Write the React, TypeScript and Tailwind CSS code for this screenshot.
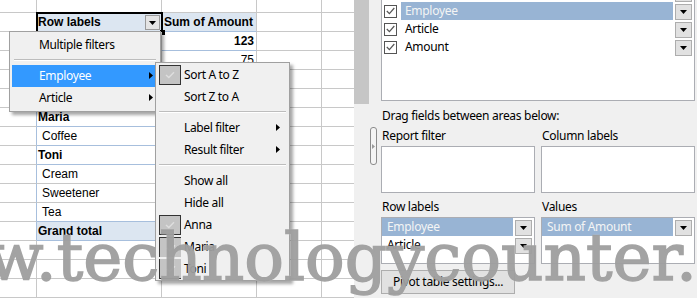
import React from "react";

const uiFont = { fontFamily: '"Noto Sans", "Open Sans", sans-serif' };
const cellFont = { fontFamily: '"Liberation Sans", Arial, sans-serif' };

function DownTri() {
  return (
    <svg width="7" height="4" viewBox="0 0 7 4">
      <path d="M0 0h7L3.5 4z" fill="#000" />
    </svg>
  );
}
function RightTri() {
  return (
    <svg width="4" height="7" viewBox="0 0 4 7">
      <path d="M0 0v7l4-3.5z" fill="#000" />
    </svg>
  );
}

function DropBtn() {
  return (
    <div className="w-[17px] h-[16px] shrink-0 bg-[#e1e1e1] border border-[#adadad] flex items-center justify-center">
      <DownTri />
    </div>
  );
}

function SmallCheck() {
  return (
    <div className="w-[13px] h-[13px] shrink-0 border border-[#555] bg-white flex items-center justify-center">
      <svg width="9" height="8" viewBox="0 0 9 8">
        <path d="M0.8 4 L3.4 6.6 L8.3 1" stroke="#555" strokeWidth="1.2" fill="none" />
      </svg>
    </div>
  );
}

function MenuCheckMark() {
  return (
    <svg width="10" height="8" viewBox="0 0 10 8">
      <path d="M1 4 L3.8 6.6 L9 1.2" stroke="#dedede" strokeWidth="1.4" fill="none" />
    </svg>
  );
}

type Kind = "header" | "emp" | "item" | "total" | "none";
type SRow = { kind: Kind; a?: string; b?: string };

const rows: SRow[] = [
  { kind: "header", a: "Row labels", b: "Sum of Amount" },
  { kind: "emp", a: "Anna", b: "123" },
  { kind: "item", a: "Coffee", b: "75" },
  { kind: "item", a: "Sweetener", b: "28" },
  { kind: "item", a: "Tea", b: "20" },
  { kind: "emp", a: "Maria", b: "96" },
  { kind: "item", a: "Coffee", b: "96" },
  { kind: "emp", a: "Toni", b: "81" },
  { kind: "item", a: "Cream", b: "17" },
  { kind: "item", a: "Sweetener", b: "30" },
  { kind: "item", a: "Tea", b: "34" },
  { kind: "total", a: "Grand total", b: "300" },
  { kind: "none" },
  { kind: "none" },
  { kind: "none" },
];

function Sheet() {
  return (
    <div className="w-[354px] shrink-0 flex flex-col bg-white text-[12px] text-black" style={cellFont}>
      <div className="h-[13px] flex shrink-0">
        <div className="w-[37px] border-r border-b border-[#c8c8c8]" />
        <div className="w-[125px] border-r border-b border-[#c8c8c8]" />
        <div className="w-[95px] border-r border-b border-[#c8c8c8]" />
        <div className="w-[65px] border-r border-b border-[#c8c8c8]" />
        <div className="flex-1 border-b border-[#c8c8c8]" />
      </div>
      {rows.map((r, i) => {
        const next = rows[i + 1];
        const pivot = r.kind !== "none";
        const blueBottom =
          pivot && (r.kind === "header" || r.kind === "emp" || r.kind === "total" || (next && (next.kind === "emp" || next.kind === "total")));
        const bottomCls = blueBottom ? "border-b-[#a7bfdd]" : "border-b-[#c8c8c8]";
        const bold = r.kind === "header" || r.kind === "emp" || r.kind === "total";
        const bg = r.kind === "header" || r.kind === "total" ? "bg-[#dce6f1]" : "bg-white";
        return (
          <div key={i} className="h-[19px] flex shrink-0">
            <div className={"w-[37px] border-r border-b border-b-[#c8c8c8] " + (pivot ? "border-r-[#a7bfdd]" : "border-r-[#c8c8c8]")} />
            <div
              className={
                "w-[125px] border-r border-b border-r-[#c8c8c8] relative flex items-center leading-none " +
                bottomCls +
                " " +
                bg +
                (bold ? " font-bold" : "") +
                (r.kind === "item" ? " pl-[5px]" : " pl-[1px]")
              }
            >
              {r.a}
              {r.kind === "header" && (
                <>
                  <div className="absolute right-[1px] top-[2px] w-[15px] h-[15px] bg-[#e4e4e4] border border-[#9a9a9a] flex items-center justify-center">
                    <DownTri />
                  </div>
                  <div className="absolute left-[-1px] top-[-1px] right-[-2px] bottom-[-2px] border-2 border-black" />
                  <div className="absolute right-[-4px] bottom-[-4px] w-[5px] h-[5px] bg-black" />
                </>
              )}
            </div>
            <div
              className={
                "w-[95px] border-r border-b border-r-[#c8c8c8] flex items-center leading-none " +
                bottomCls +
                " " +
                bg +
                (r.kind === "header" ? " pl-[2px] font-bold" : " justify-end pr-[2px]") +
                (r.kind === "emp" || r.kind === "total" ? " font-bold" : "")
              }
            >
              {r.b}
            </div>
            <div className="w-[65px] border-r border-b border-[#c8c8c8]" />
            <div className="flex-1 border-b border-[#c8c8c8]" />
          </div>
        );
      })}
    </div>
  );
}

function FieldRow({ label, selected }: { label: string; selected?: boolean }) {
  return (
    <div className="h-[18px] flex items-center">
      <div className="ml-[2px]">
        <SmallCheck />
      </div>
      <div
        className={
          "ml-[4px] flex-1 h-[18px] flex items-center pl-[4px] " + (selected ? "bg-[#98b4d4] text-[#f4f4f4]" : "text-black")
        }
      >
        {label}
      </div>
      <div className="ml-[2px] mr-[2px] self-start mt-[2px]">
        <DropBtn />
      </div>
    </div>
  );
}

function AreaRow({ label, selected }: { label: string; selected?: boolean }) {
  return (
    <div className="h-[18px] flex items-center">
      <div
        className={"flex-1 h-[18px] flex items-center pl-[5px] " + (selected ? "bg-[#98b4d4] text-[#f4f4f4]" : "text-black")}
      >
        {label}
      </div>
      <div className="ml-[2px] mr-[2px] self-start mt-[2px]">
        <DropBtn />
      </div>
    </div>
  );
}

function Panel() {
  return (
    <div className="flex-1 flex bg-[#f0f0f0] text-[12px] tracking-[-0.3px] text-black" style={uiFont}>
      <div className="w-[12px] shrink-0">
        <div className="ml-[1px] mt-[127px] w-[7px] h-[38px] rounded-[3px] border border-[#8c8c8c] bg-[#f4f4f4] flex items-start justify-center pt-[16px]">
          <svg width="3" height="5" viewBox="0 0 3 5">
            <path d="M0 0v5l3-2.5z" fill="#9a9a9a" />
          </svg>
        </div>
      </div>
      <div className="w-[314px] flex flex-col">
        <div className="h-[101px] border-x border-b border-[#abadb3] bg-white overflow-hidden">
          <div className="mt-[-16px] leading-none">
            <FieldRow label="Name" />
            <FieldRow label="Employee" selected />
            <FieldRow label="Article" />
            <FieldRow label="Amount" />
          </div>
        </div>
        <div className="mt-[7px] h-[16px] leading-[16px] pl-[1px]">Drag fields between areas below:</div>
        <div className="grid grid-cols-[154px_154px] gap-x-[6px]">
          <div className="mt-[4px] h-[16px] leading-[16px] pl-[1px]">Report filter</div>
          <div className="mt-[4px] h-[16px] leading-[16px] pl-[1px]">Column labels</div>
          <div className="mt-[2px] h-[47px] bg-white border border-[#abadb3]" />
          <div className="mt-[2px] h-[47px] bg-white border border-[#abadb3]" />
          <div className="mt-[6px] h-[16px] leading-[16px] pl-[1px]">Row labels</div>
          <div className="mt-[6px] h-[16px] leading-[16px] pl-[1px]">Values</div>
          <div className="mt-[2px] h-[47px] bg-white border border-[#abadb3] leading-none">
            <AreaRow label="Employee" selected />
            <AreaRow label="Article" />
          </div>
          <div className="mt-[2px] h-[47px] bg-white border border-[#abadb3] leading-none">
            <AreaRow label="Sum of Amount" selected />
          </div>
        </div>
        <div className="mt-[6px] w-[134px] h-[24px] bg-[#e1e1e1] border border-[#adadad] flex items-center pl-[11px] leading-none">
          Pivot table settings...
        </div>
      </div>
    </div>
  );
}

function MenuItem({
  label,
  highlight,
  arrow,
  check,
  checkStyle,
  textPad,
  arrowRight,
}: {
  label: string;
  highlight?: boolean;
  arrow?: boolean;
  check?: boolean;
  checkStyle?: string;
  textPad: string;
  arrowRight: string;
}) {
  return (
    <div
      className={
        "relative h-[22px] flex items-center leading-none " + textPad + (highlight ? " bg-[#3399ff] text-white" : " text-black")
      }
    >
      {check && (
        <div
          className={
            "absolute left-[3px] top-[1px] w-[22px] h-[20px] bg-[#c4c4c4] flex items-center justify-center " +
            (checkStyle || "border border-[#333]")
          }
        >
          <MenuCheckMark />
        </div>
      )}
      {label}
      {arrow && (
        <div className={"absolute top-[7px] " + arrowRight}>
          <RightTri />
        </div>
      )}
    </div>
  );
}

function Separator({ inset }: { inset: string }) {
  return (
    <div className={"h-[9px] pt-[3px] " + inset}>
      <div className="h-[1px] bg-[#bdbdbd]" />
      <div className="h-[1px] bg-white" />
    </div>
  );
}

function Menus() {
  return (
    <div className="text-[12px] tracking-[-0.35px]" style={uiFont}>
      <div className="absolute left-[9px] top-[31px] w-[152px] h-[81px] bg-[#f0f0f0] border border-[#a0a0a0] shadow-[3px_3px_3px_rgba(0,0,0,0.35)] pt-[2px] px-[2px]">
        <MenuItem label="Multiple filters" textPad="pl-[27px]" arrowRight="right-[7px]" />
        <Separator inset="px-[2px]" />
        <div className="mr-[2px]">
          <MenuItem label="Employee" highlight arrow textPad="pl-[27px]" arrowRight="right-[3px]" />
          <MenuItem label="Article" arrow textPad="pl-[27px]" arrowRight="right-[3px]" />
        </div>
      </div>
      <div className="absolute left-[155px] top-[62px] w-[135px] h-[219px] bg-[#f0f0f0] border border-[#a0a0a0] shadow-[3px_3px_3px_rgba(0,0,0,0.35)] pt-[1px]">
        <MenuItem label="Sort A to Z" check textPad="pl-[28px]" arrowRight="right-[8px]" />
        <MenuItem label="Sort Z to A" textPad="pl-[28px]" arrowRight="right-[8px]" />
        <Separator inset="pl-[3px] pr-[3px]" />
        <MenuItem label="Label filter" arrow textPad="pl-[28px]" arrowRight="right-[9px]" />
        <MenuItem label="Result filter" arrow textPad="pl-[28px]" arrowRight="right-[9px]" />
        <Separator inset="pl-[3px] pr-[3px]" />
        <MenuItem label="Show all" textPad="pl-[28px]" arrowRight="right-[8px]" />
        <MenuItem label="Hide all" textPad="pl-[28px]" arrowRight="right-[8px]" />
        <MenuItem label="Anna" check textPad="pl-[28px]" arrowRight="right-[8px]" />
        <MenuItem label="Maria" check checkStyle="border-l border-t border-[#333]" textPad="pl-[28px]" arrowRight="right-[8px]" />
        <MenuItem label="Toni" check checkStyle="border-l border-b border-[#333]" textPad="pl-[28px]" arrowRight="right-[8px]" />
      </div>
    </div>
  );
}

export default function App() {
  return (
    <div className="relative w-[697px] h-[298px] overflow-hidden flex bg-white">
      <Sheet />
      <div className="w-[15px] shrink-0 flex flex-col">
        <div className="h-[104px] bg-[#c6c6c6]" />
        <div className="flex-1 bg-[#f0f0f0]" />
      </div>
      <Panel />
      <Menus />
      <div
        className="absolute left-[-126px] top-[225px] text-[66px] leading-none whitespace-nowrap text-[#9f9f9f] opacity-95 pointer-events-none [text-shadow:0_0_2px_rgba(255,255,255,0.9)] [-webkit-text-stroke:1.5px_#9f9f9f]"
        style={{ fontFamily: '"DejaVu Serif", "Liberation Serif", serif' }}
      >
        www.technologycounter.com
      </div>
    </div>
  );
}
